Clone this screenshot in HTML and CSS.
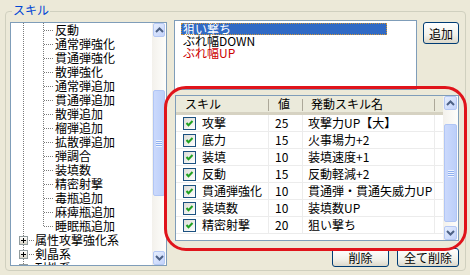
FILE: index.html
```html
<!DOCTYPE html>
<html lang="ja">
<head>
    <meta charset="UTF-8">
    <meta name="viewport" content="width=device-width, initial-scale=1.0">
    <title>スキル</title>
    <link rel="stylesheet" href="styles.css">
</head>
<body>
    <div class="group">
        <span class="caption">スキル</span>

        <div class="tree">
            <div class="tree-items">
                <div class="node leaf">反動</div>
                <div class="node leaf">通常弾強化</div>
                <div class="node leaf">貫通弾強化</div>
                <div class="node leaf">散弾強化</div>
                <div class="node leaf">通常弾追加</div>
                <div class="node leaf">貫通弾追加</div>
                <div class="node leaf">散弾追加</div>
                <div class="node leaf">榴弾追加</div>
                <div class="node leaf">拡散弾追加</div>
                <div class="node leaf">弾調合</div>
                <div class="node leaf">装填数</div>
                <div class="node leaf">精密射撃</div>
                <div class="node leaf">毒瓶追加</div>
                <div class="node leaf">麻痺瓶追加</div>
                <div class="node leaf last">睡眠瓶追加</div>
                <div class="node root">属性攻撃強化系</div>
                <div class="node root">剣晶系</div>
                <div class="node root">耐性系</div>
            </div>
            <div class="vscroll">
                <span class="sb-btn"><svg width="9" height="6" viewBox="0 0 9 6"><path d="M1 5 L4.5 1.5 L8 5" fill="none" stroke="#4D6185" stroke-width="2"/></svg></span>
                <span class="sb-track"><span class="sb-thumb tree-thumb"></span></span>
                <span class="sb-btn"><svg width="9" height="6" viewBox="0 0 9 6"><path d="M1 1 L4.5 4.5 L8 1" fill="none" stroke="#4D6185" stroke-width="2"/></svg></span>
            </div>
        </div>

        <div class="side">
            <div class="side-top">
                <div class="listbox">
                    <div class="lb-item selected">狙い撃ち</div>
                    <div class="lb-item">ぶれ幅DOWN</div>
                    <div class="lb-item red">ぶれ幅UP</div>
                </div>
                <button class="btn btn-add">追加</button>
            </div>

            <div class="listview">
                <div class="lv-main">
                    <table>
                        <colgroup>
                            <col class="c-skill">
                            <col class="c-val">
                            <col class="c-name">
                            <col>
                        </colgroup>
                        <thead>
                            <tr>
                                <th class="h-skill">スキル</th>
                                <th class="h-val">値</th>
                                <th class="h-name">発動スキル名</th>
                                <th class="h-fill"></th>
                            </tr>
                        </thead>
                        <tbody>
                            <tr><td class="d-skill"><span class="chk"><svg width="11" height="11" viewBox="0 0 11 11"><path d="M2.5 5 L4.5 7.2 L8.5 3" fill="none" stroke="#21A121" stroke-width="2"/></svg></span>攻撃</td><td class="d-val">25</td><td class="d-name">攻撃力UP【大】</td><td></td></tr>
                            <tr><td class="d-skill"><span class="chk"><svg width="11" height="11" viewBox="0 0 11 11"><path d="M2.5 5 L4.5 7.2 L8.5 3" fill="none" stroke="#21A121" stroke-width="2"/></svg></span>底力</td><td class="d-val">15</td><td class="d-name">火事場力+2</td><td></td></tr>
                            <tr><td class="d-skill"><span class="chk"><svg width="11" height="11" viewBox="0 0 11 11"><path d="M2.5 5 L4.5 7.2 L8.5 3" fill="none" stroke="#21A121" stroke-width="2"/></svg></span>装填</td><td class="d-val">10</td><td class="d-name">装填速度+1</td><td></td></tr>
                            <tr><td class="d-skill"><span class="chk"><svg width="11" height="11" viewBox="0 0 11 11"><path d="M2.5 5 L4.5 7.2 L8.5 3" fill="none" stroke="#21A121" stroke-width="2"/></svg></span>反動</td><td class="d-val">15</td><td class="d-name">反動軽減+2</td><td></td></tr>
                            <tr><td class="d-skill"><span class="chk"><svg width="11" height="11" viewBox="0 0 11 11"><path d="M2.5 5 L4.5 7.2 L8.5 3" fill="none" stroke="#21A121" stroke-width="2"/></svg></span>貫通弾強化</td><td class="d-val">10</td><td class="d-name">貫通弾・貫通矢威力UP</td><td></td></tr>
                            <tr><td class="d-skill"><span class="chk"><svg width="11" height="11" viewBox="0 0 11 11"><path d="M2.5 5 L4.5 7.2 L8.5 3" fill="none" stroke="#21A121" stroke-width="2"/></svg></span>装填数</td><td class="d-val">10</td><td class="d-name">装填数UP</td><td></td></tr>
                            <tr><td class="d-skill"><span class="chk"><svg width="11" height="11" viewBox="0 0 11 11"><path d="M2.5 5 L4.5 7.2 L8.5 3" fill="none" stroke="#21A121" stroke-width="2"/></svg></span>精密射撃</td><td class="d-val">20</td><td class="d-name">狙い撃ち</td><td></td></tr>
                        </tbody>
                    </table>
                </div>
                <div class="vscroll">
                    <span class="sb-btn"><svg width="9" height="6" viewBox="0 0 9 6"><path d="M1 5 L4.5 1.5 L8 5" fill="none" stroke="#4D6185" stroke-width="2"/></svg></span>
                    <span class="sb-track"><span class="sb-thumb lv-thumb"></span></span>
                    <span class="sb-btn"><svg width="9" height="6" viewBox="0 0 9 6"><path d="M1 1 L4.5 4.5 L8 1" fill="none" stroke="#4D6185" stroke-width="2"/></svg></span>
                </div>
            </div>

            <div class="side-bottom">
                <button class="btn btn-del">削除</button>
                <button class="btn btn-clear">全て削除</button>
            </div>
        </div>

        <div class="mark"></div>
    </div>
</body>
</html>
```

FILE: styles.css
```css
html, body {
    margin: 0;
    height: 275px;
    overflow: hidden;
}
body {
    background-color: #ece9d8;
    font-family: "Noto Sans CJK JP", sans-serif;
    font-size: 12px;
    color: #000;
}

/* group box */
.group {
    position: relative;
    display: flex;
    align-items: flex-start;
    box-sizing: border-box;
    width: 461px;
    height: 260px;
    margin: 11px 0 0 5px;
    padding: 8px 0 0 4px;
    border: 1px solid #d0d0bf;
    border-radius: 4px;
}
.caption {
    position: absolute;
    top: -9px;
    left: 6px;
    padding: 0 1px;
    line-height: 14px;
    background-color: #ece9d8;
    color: #0046d5;
}

/* tree */
.tree {
    display: flex;
    box-sizing: border-box;
    width: 157px;
    height: 244px;
    margin-top: 2px;
    border: 1px solid #7f9db9;
    background-color: #fff;
    overflow: hidden;
}
.tree-items {
    flex: 1;
    overflow: hidden;
}
.node {
    height: 14px;
    line-height: 14px;
    white-space: nowrap;
    background-repeat: no-repeat;
}
.leaf {
    padding-left: 44px;
    background-image:
        repeating-linear-gradient(to right, #7b7b7b 0 1px, transparent 1px 2px),
        repeating-linear-gradient(#7b7b7b 0 1px, transparent 1px 2px),
        repeating-linear-gradient(#7b7b7b 0 1px, transparent 1px 2px);
    background-position: 33px 7px, 32px 0, 12px 0;
    background-size: 9px 1px, 1px 14px, 1px 14px;
}
.leaf.last {
    background-size: 9px 1px, 1px 8px, 1px 14px;
}
.root {
    padding-left: 24px;
    background-image:
        linear-gradient(#000, #000),
        linear-gradient(#000, #000),
        linear-gradient(#fff, #d9d5c9),
        linear-gradient(#919b9c, #919b9c),
        repeating-linear-gradient(to right, #7b7b7b 0 1px, transparent 1px 2px),
        repeating-linear-gradient(#7b7b7b 0 1px, transparent 1px 2px);
    background-position: 10px 7px, 12px 5px, 9px 4px, 8px 3px, 18px 7px, 12px 0;
    background-size: 5px 1px, 1px 5px, 7px 7px, 9px 9px, 6px 1px, 1px 14px;
}

/* scrollbars */
.vscroll {
    display: flex;
    flex-direction: column;
    width: 14px;
    background: linear-gradient(to right, #f3f1ec, #fefefb);
}
.listview .vscroll {
    width: 15px;
}
.sb-btn {
    display: flex;
    align-items: center;
    justify-content: center;
    box-sizing: border-box;
    height: 14px;
    margin: 0 1px;
    border: 1px solid #b5c8f4;
    border-radius: 2px;
    background: linear-gradient(135deg, #e6eefd, #c3d3fb);
}
.sb-track {
    flex: 1;
    display: flex;
    flex-direction: column;
}
.sb-thumb {
    display: block;
    box-sizing: border-box;
    margin: 0 1px;
    border: 1px solid #b1c6f5;
    border-radius: 2px;
    background:
        repeating-linear-gradient(#eef3fe 0 1px, #8fb0f0 1px 2px) center / 6px 7px no-repeat,
        linear-gradient(to right, #cbd9fc, #bccff9);
}
.tree-thumb {
    margin-top: 53px;
    height: 106px;
}
.lv-thumb {
    margin-top: 14px;
    height: 98px;
}

/* right side */
.side {
    display: flex;
    flex-direction: column;
    width: 285px;
    margin-left: 7px;
}
.side-top {
    display: flex;
    align-items: flex-start;
    height: 70px;
}
.listbox {
    box-sizing: border-box;
    width: 243px;
    height: 70px;
    padding-top: 2px;
    border: 1px solid #7f9db9;
    background-color: #fff;
}
.lb-item {
    width: 204px;
    height: 12px;
    margin-left: 6px;
    padding-left: 2px;
    line-height: 12px;
    white-space: nowrap;
}
.lb-item.selected {
    background-color: #316ac5;
    color: #fff;
    outline: 1px dotted #ce953a;
    outline-offset: -1px;
}
.lb-item.red {
    color: #cc0000;
}

.btn {
    box-sizing: border-box;
    padding: 0;
    border: 1px solid #003c74;
    border-radius: 3px;
    background: linear-gradient(#ffffff, #f2f1ea 60%, #dcd8ca);
    font-family: inherit;
    font-size: 12px;
    color: #000;
}
.btn-add {
    width: 36px;
    height: 22px;
    margin: 2px 0 0 6px;
}

/* list view */
.listview {
    display: flex;
    box-sizing: border-box;
    width: 284px;
    height: 146px;
    margin: 5px 0 0 1px;
    border: 1px solid #7f9db9;
    background-color: #fff;
}
.lv-main {
    flex: 1;
    overflow: hidden;
}
table {
    width: 267px;
    table-layout: fixed;
    border-collapse: separate;
    border-spacing: 0;
}
.c-skill { width: 93px; }
.c-val { width: 34px; }
.c-name { width: 132px; }
th {
    height: 16px;
    padding: 0;
    border-bottom: 3px solid #d6d2c2;
    line-height: 16px;
    font-weight: normal;
    text-align: left;
    white-space: nowrap;
    background:
        linear-gradient(#aca899, #aca899) right 3px / 1px 12px no-repeat,
        #ebeadb;
}
th.h-skill { padding-left: 9px; }
th.h-val { padding-left: 9px; }
th.h-name { padding-left: 8px; }
th.h-fill { background: #ebeadb; }
td {
    height: 16px;
    padding: 0;
    border-bottom: 1px solid #ececec;
    line-height: 16px;
    white-space: nowrap;
    vertical-align: top;
    overflow: hidden;
}
td.d-skill {
    padding-left: 7px;
    border-right: 1px solid #ececec;
}
td.d-val {
    padding-left: 6px;
    border-right: 1px solid #ececec;
}
td.d-name {
    padding-left: 5px;
    border-right: 1px solid #ececec;
}
.chk {
    display: inline-flex;
    align-items: center;
    justify-content: center;
    box-sizing: border-box;
    width: 13px;
    height: 13px;
    margin: 2px 6px 0 0;
    vertical-align: top;
    border: 1px solid #1c5180;
    background: linear-gradient(135deg, #dcdcd7, #ffffff);
}

.side-bottom {
    display: flex;
    justify-content: flex-end;
    gap: 8px;
    margin-top: 7px;
}
.btn-del {
    width: 57px;
    height: 19px;
}
.btn-clear {
    width: 62px;
    height: 19px;
}

/* red annotation drawn over the list */
.mark {
    position: absolute;
    left: 158px;
    top: 74px;
    box-sizing: border-box;
    width: 303px;
    height: 165px;
    border: 3px solid #e0141b;
    border-radius: 22px;
    pointer-events: none;
}
```
